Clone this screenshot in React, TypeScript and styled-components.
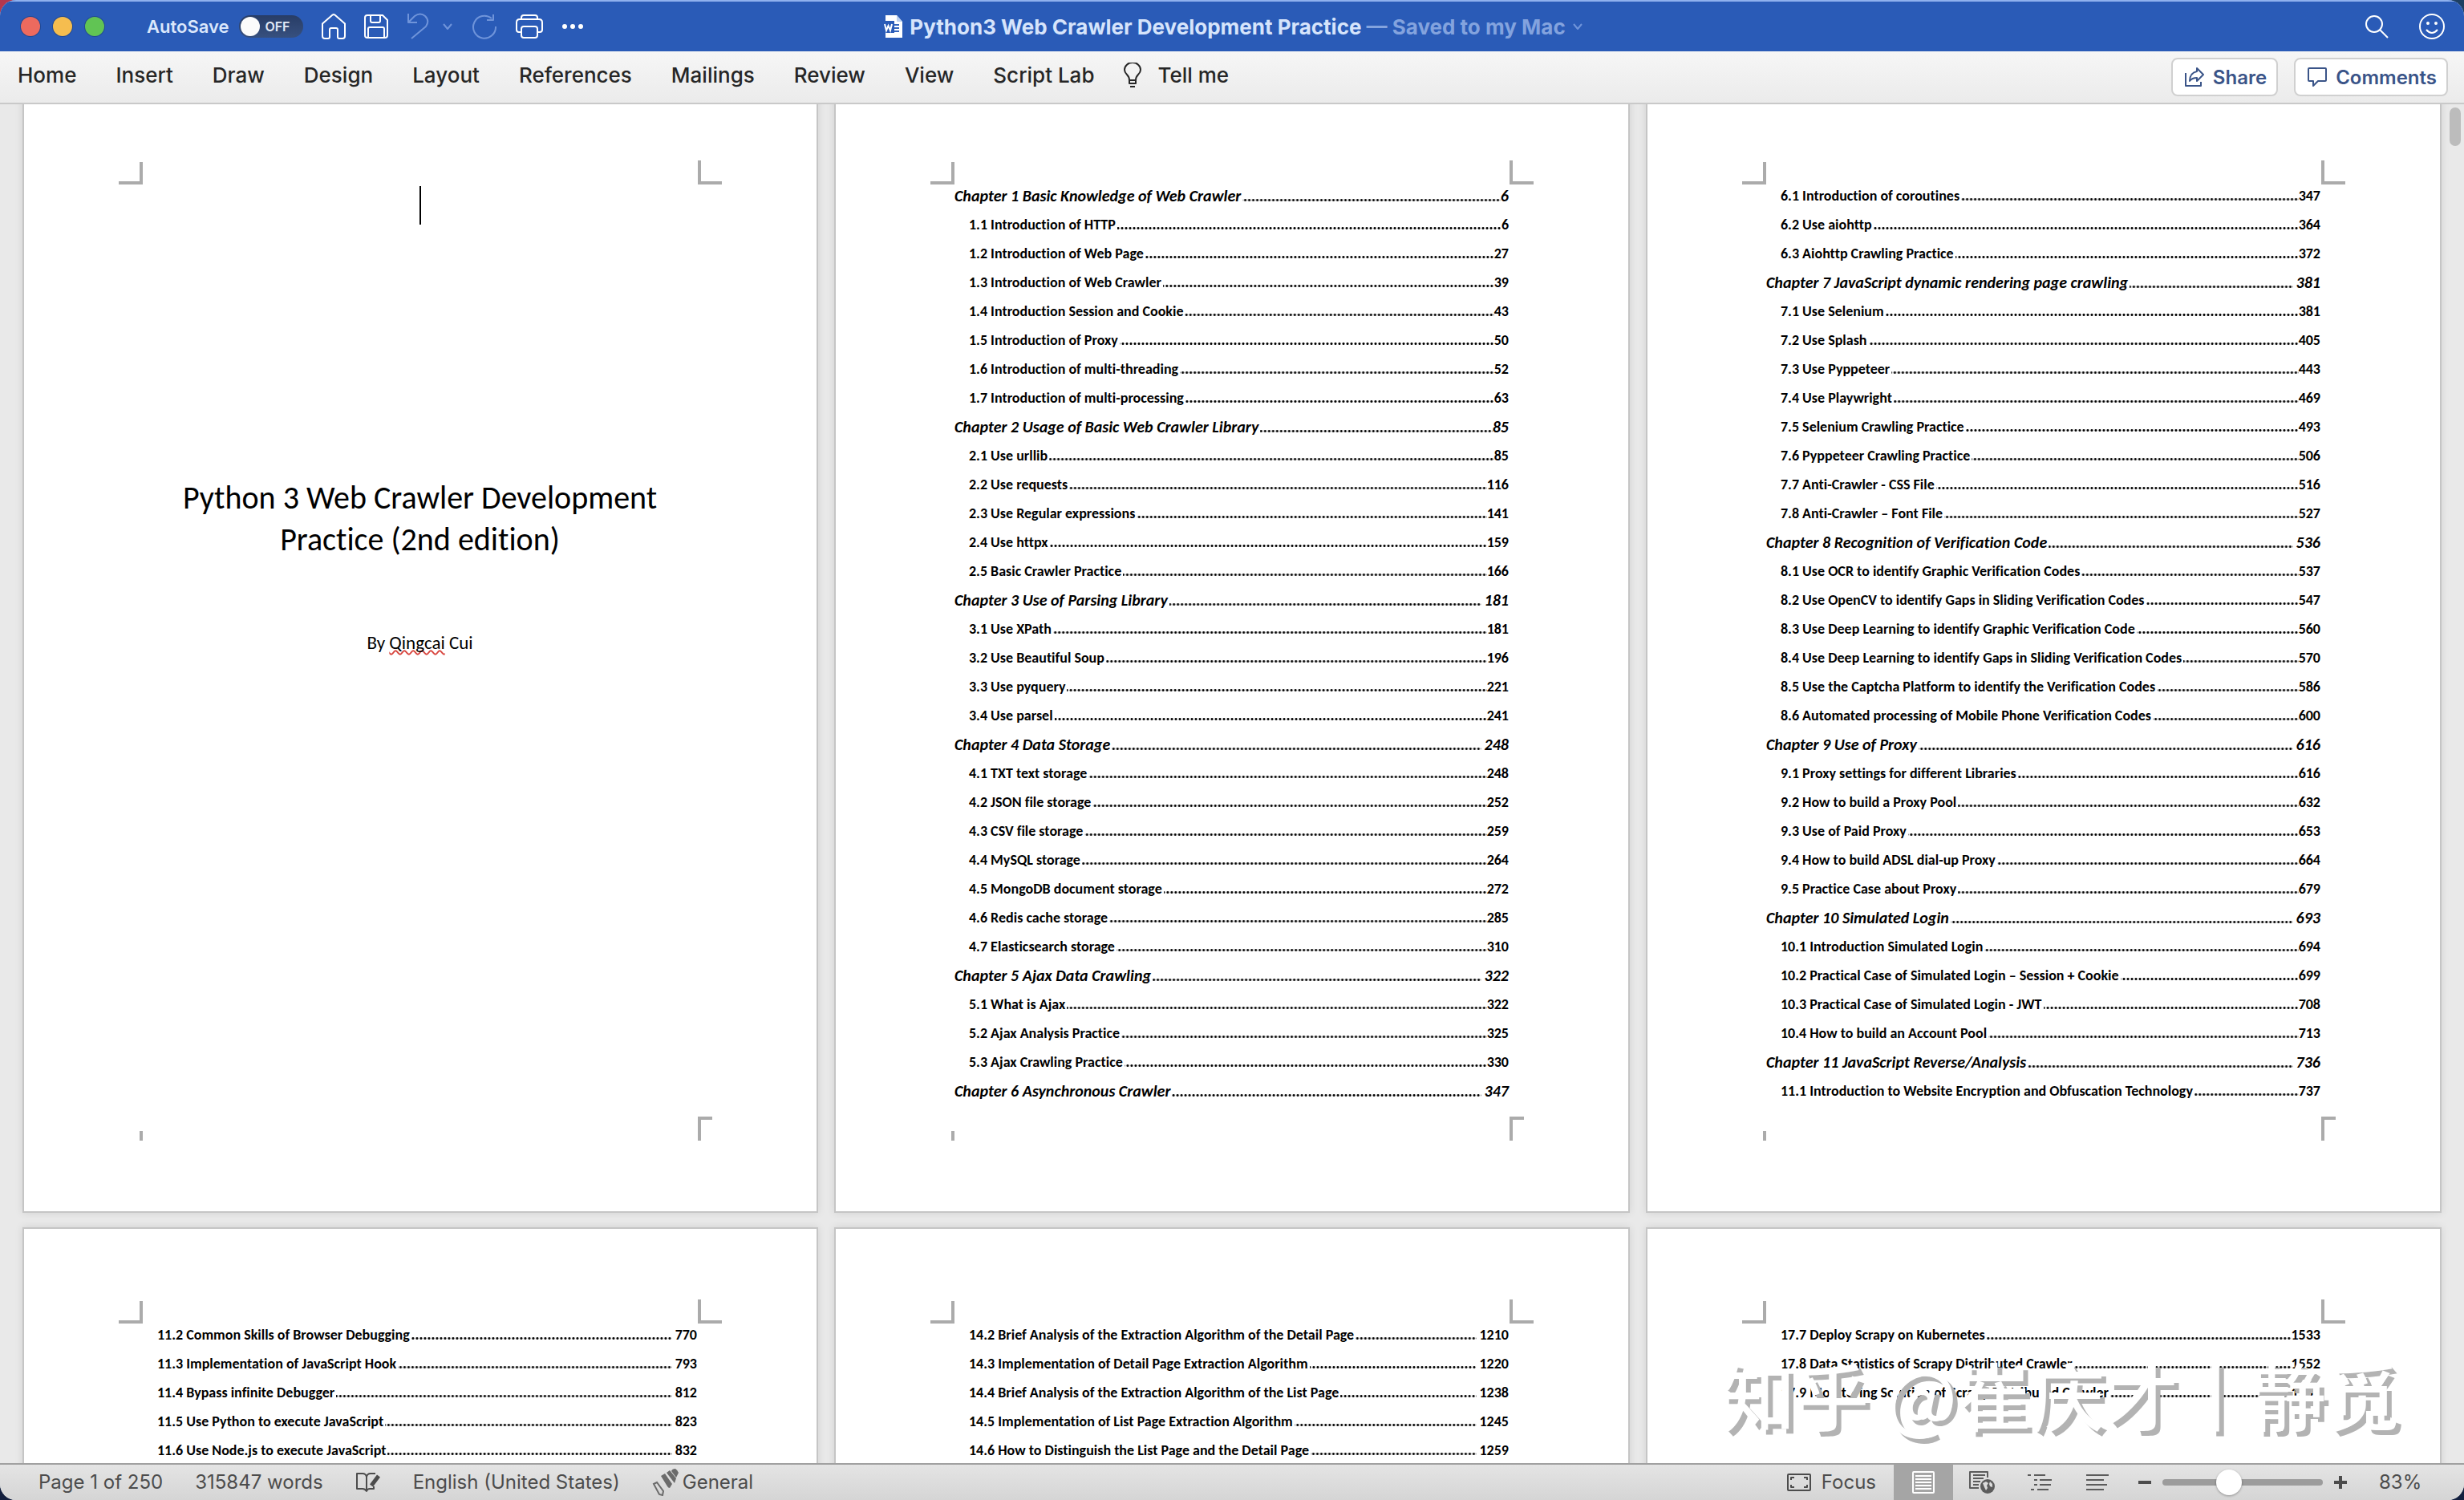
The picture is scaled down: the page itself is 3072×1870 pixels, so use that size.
import React from 'react';
import styled, { createGlobalStyle, css } from 'styled-components';

const ui = `Inter, 'Liberation Sans', sans-serif`;
const doc = `Carlito, Lato, 'Liberation Sans', sans-serif`;

const GlobalStyle = createGlobalStyle`
  *, *::before, *::after { box-sizing: border-box; }
  body { margin: 0; background: linear-gradient(90deg, #b3374f 0 30%, #1d3f63 70%); font-family: ${ui}; }
  button, input { font: inherit; margin: 0; }
  button { padding: 0; border: 0; background: none; color: inherit; }
  ol { list-style: none; margin: 0; padding: 0; }
  svg { display: block; flex: none; }
`;

/* ---------- window ---------- */
const Desktop = styled.div`
  background: linear-gradient(#0000 50%, #14203f 50%);
`;
const Window = styled.div`
  display: flex;
  flex-direction: column;
  height: 100vh;
  overflow: hidden;
  border-radius: 20px;
  background: #e9e9e9;
`;

/* ---------- title bar ---------- */
const TitleBar = styled.header`
  display: grid;
  grid-template-columns: 1fr auto 1fr;
  align-items: center;
  flex: none;
  height: 64px;
  padding: 0 24px 0 26px;
  border-top: 2px solid #8fb1ee;
  background: #2a5bb7;
  color: #fff;
`;
const BarGroup = styled.div<{ $end?: boolean }>`
  display: flex;
  align-items: center;
  gap: ${(p) => (p.$end ? 38 : 23)}px;
  justify-content: ${(p) => (p.$end ? 'flex-end' : 'flex-start')};
`;
const Lights = styled.div`
  display: flex;
  gap: 16px;
  margin-right: 30px;
`;
const Light = styled.button<{ $color: string }>`
  width: 24px;
  height: 24px;
  border-radius: 50%;
  background: ${(p) => p.$color};
  box-shadow: 0 0 0 1px #0003;
`;
const AutoSave = styled.label`
  display: flex;
  align-items: center;
  gap: 12px;
  font-size: 22px;
  font-weight: 600;
  color: #dbe7fb;
`;
const SwitchTrack = styled.span`
  position: relative;
  display: flex;
  align-items: center;
  justify-content: flex-end;
  width: 80px;
  height: 28px;
  padding-right: 16px;
  border-radius: 14px;
  background: linear-gradient(#283d66, #37507f);
  font-size: 16px;
  font-weight: 600;
  color: #e3eaf6;
`;
const SwitchInput = styled.input`
  appearance: none;
  position: absolute;
  left: 2px;
  top: 2px;
  width: 24px;
  height: 24px;
  border-radius: 50%;
  background: #fbfbfb;
`;
const IconButton = styled.button<{ $dim?: boolean }>`
  display: flex;
  color: ${(p) => (p.$dim ? '#6f94da' : '#fff')};
`;
const UndoGroup = styled.div`
  display: flex;
  align-items: center;
  gap: 16px;
`;
const DocTitle = styled.h1`
  display: flex;
  align-items: center;
  gap: 8px;
  margin: 0;
  font-size: 26px;
  font-weight: 700;
  white-space: pre;
  color: #d6e4fb;
`;
const SavedState = styled.span`
  color: #83a3de;
`;

/* ---------- ribbon ---------- */
const Ribbon = styled.nav`
  display: flex;
  align-items: center;
  justify-content: space-between;
  flex: none;
  height: 66px;
  padding: 0 20px 0 22px;
  border-bottom: 2px solid #c9c9c9;
  background: linear-gradient(#f6f6f6, #ebebeb);
`;
const Tabs = styled.div`
  display: flex;
  align-items: center;
  gap: 49px;
  font-size: 26px;
  font-weight: 500;
  line-height: 32px;
  color: #262626;
  padding-bottom: 4px;
`;
const TellMe = styled.button`
  display: flex;
  align-items: center;
  gap: 20px;
  margin-left: -12px;
`;
const Actions = styled.div`
  display: flex;
  gap: 20px;
`;
const ActionButton = styled.button`
  display: flex;
  align-items: center;
  gap: 10px;
  height: 48px;
  padding: 0 12px 0 14px;
  border: 2px solid #d0d0d0;
  border-radius: 8px;
  background: #fff;
  font-size: 24px;
  font-weight: 600;
  color: #3a5488;
`;

/* ---------- document ---------- */
const Workspace = styled.main`
  position: relative;
  display: flex;
  flex: 1;
  min-height: 0;
  overflow: hidden;
`;
const Sheets = styled.div`
  display: grid;
  grid-template-columns: repeat(3, minmax(0, 1fr));
  grid-auto-rows: max-content;
  gap: 18px 20px;
  flex: 1;
  margin-top: -20px;
  padding-left: 28px;
`;
const ScrollTrack = styled.div`
  flex: none;
  width: 28px;
  padding: 4px 4px 0 10px;
`;
const ScrollThumb = styled.div`
  height: 48px;
  border-radius: 7px;
  background: #bcbcbc;
`;
const Page = styled.article`
  position: relative;
  min-height: 1402px;
  padding: 114px 149px 0 148px;
  border: 2px solid #c5c5c5;
  background: #fff;
  box-shadow: 0 0 10px #0000001a;
  font-family: ${doc};
  font-variant-ligatures: none;
  color: #000;
`;
const corners = {
  tl: css`left: 118px; top: 90px; width: 30px; height: 28px; border-width: 0 4px 4px 0;`,
  tr: css`right: 118px; top: 88px; width: 30px; height: 30px; border-width: 0 0 4px 4px;`,
  bl: css`left: 144px; top: 1298px; width: 4px; height: 12px; border-width: 0 4px 0 0;`,
  br: css`right: 130px; top: 1280px; width: 18px; height: 30px; border-width: 4px 0 0 4px;`,
};
const Corner = styled.span<{ $at: keyof typeof corners }>`
  position: absolute;
  border: 0 solid #ababab;
  ${(p) => corners[p.$at]}
`;
const Caret = styled.div`
  width: 2px;
  height: 48px;
  margin: 6px auto 0;
  background: #000;
`;
const BookTitle = styled.h2`
  margin: 315px 0 84px;
  font-size: 40px;
  font-weight: 400;
  line-height: 52px;
  text-align: center;
`;
const Byline = styled.p`
  margin: 0;
  font-size: 23px;
  line-height: 36px;
  text-align: center;
`;
const Misspelled = styled.span`
  text-decoration: underline wavy #d8453e 2px;
  text-decoration-skip-ink: none;
`;
const Entry = styled.li<{ $chapter: boolean }>`
  padding-left: ${(p) => (p.$chapter ? 0 : 18)}px;
  font-size: ${(p) => (p.$chapter ? 20 : 18)}px;
  font-style: ${(p) => (p.$chapter ? 'italic' : 'normal')};
  font-weight: 700;
  line-height: 36px;
`;
const EntryLink = styled.a`
  display: flex;
  align-items: baseline;
  color: inherit;
  text-decoration: none;
  white-space: nowrap;
`;
const Leader = styled.span<{ $gap: number }>`
  flex: 1;
  height: 3px;
  margin: 0 ${(p) => p.$gap}px 0 2px;
  background: radial-gradient(circle at 2px 50%, #000 1px, #0000 2px) right bottom / 5px 3px repeat-x;
`;
const Watermark = styled.p`
  position: absolute;
  right: 80px;
  bottom: 22px;
  margin: 0;
  font-family: 'Noto Sans CJK SC', sans-serif;
  font-size: 92px;
  font-weight: 500;
  line-height: 130px;
  white-space: pre;
  color: #fff;
  text-shadow: 6px 6px 0 #b3b3b3;
`;

/* ---------- status bar ---------- */
const StatusBar = styled.footer`
  display: flex;
  align-items: center;
  justify-content: space-between;
  flex: none;
  height: 46px;
  padding: 0 50px 0 48px;
  border-top: 2px solid #a1a1a1;
  background: linear-gradient(#e4e4e4, #d5d5d5);
  font-size: 24px;
  line-height: 44px;
  color: #4c4c4c;
`;
const StatusGroup = styled.div<{ $gap: number }>`
  display: flex;
  align-items: center;
  height: 100%;
  gap: ${(p) => p.$gap}px;
`;
const StatusButton = styled.button<{ $gap?: number }>`
  display: flex;
  align-items: center;
  gap: ${(p) => p.$gap ?? 0}px;
`;
const ViewButton = styled.button<{ $active?: boolean }>`
  display: flex;
  align-items: center;
  justify-content: center;
  width: ${(p) => (p.$active ? 74 : 72)}px;
  height: 44px;
  background: ${(p) => (p.$active ? '#a5a5a5' : 'none')};
  color: ${(p) => (p.$active ? '#fff' : '#5c5c5c')};
`;
const Zoom = styled.input`
  appearance: none;
  width: 200px;
  height: 8px;
  border-radius: 4px;
  background: #9c9c9c;
  &::-webkit-slider-thumb {
    appearance: none;
    width: 32px;
    height: 32px;
    border-radius: 50%;
    background: #fff;
    box-shadow: 0 1px 3px #0005;
  }
`;
const ZoomValue = styled.output`
  width: 56px;
  margin-left: 26px;
`;

/* ---------- icons ---------- */
type IconProps = { w: number; h: number; sw?: number; children: React.ReactNode };
const Icon = ({ w, h, sw = 2, children }: IconProps) => (
  <svg width={w} height={h} viewBox={`0 0 ${w} ${h}`} fill="none" stroke="currentColor" strokeWidth={sw} strokeLinejoin="round" aria-hidden="true">
    {children}
  </svg>
);
const HomeIcon = () => (
  <Icon w={30} h={32}>
    <path d="M1 12.5 13.6 1.6q1.4-1 2.8 0L29 12.5V28q0 3-3 3h-4q-2 0-2-2V20q0-2-2-2h-6q-2 0-2 2v9q0 2-2 2H4q-3 0-3-3Z" />
  </Icon>
);
const SaveIcon = () => (
  <Icon w={30} h={30}>
    <path d="M4 1h19l6 6v19q0 3-3 3H4q-3 0-3-3V4q0-3 3-3ZM8 1v7q0 2 2 2h8q2 0 2-2V1M5 29V18q0-2 2-2h16q2 0 2 2v11" />
  </Icon>
);
const UndoIcon = () => (
  <Icon w={28} h={34}>
    <path d="M2 1v11h11M2 12 10 4Q17-1 23 4q6 6 1 13L6 32" />
  </Icon>
);
const ChevronIcon = () => (
  <Icon w={14} h={10} sw={2}>
    <path d="m2 2 5 6 5-6" />
  </Icon>
);
const RedoIcon = () => (
  <Icon w={32} h={32}>
    <path d="M25 6A14 14 0 1 0 30 16M27 1v7h-8" />
  </Icon>
);
const PrintIcon = () => (
  <Icon w={34} h={30}>
    <path d="M7 6V4q0-3 3-3h14q3 0 3 3v2M7 22H4q-3 0-3-3v-9q0-4 4-4h24q4 0 4 4v9q0 3-3 3h-3M10 15h14q3 0 3 3v8q0 3-3 3H10q-3 0-3-3v-8q0-3 3-3Z" />
  </Icon>
);
const MoreIcon = () => (
  <svg width="28" height="8" viewBox="0 0 28 8" fill="currentColor" aria-hidden="true">
    <circle cx="4" cy="4" r="3" />
    <circle cx="14" cy="4" r="3" />
    <circle cx="24" cy="4" r="3" />
  </svg>
);
const WordFileIcon = () => (
  <svg width="26" height="30" viewBox="0 0 26 30" aria-hidden="true">
    <path d="M4 1h14l7 8v20H4Z" fill="#fff" />
    <path d="M18 1v8h7Z" fill="#bcd0f0" />
    <path d="M15 13h6M15 17h6M15 21h6" stroke="#3465bd" strokeWidth="2" />
    <rect x="0" y="8" width="15" height="15" fill="#2a5bb7" />
    <path d="m3 12 2 8 2.500-6 2.500 6 2-8" stroke="#fff" strokeWidth="2" fill="none" />
  </svg>
);
const SearchIcon = () => (
  <Icon w={30} h={30}>
    <circle cx="12" cy="12" r="10" />
    <path d="m19 19 10 10" />
  </Icon>
);
const SmileIcon = () => (
  <Icon w={32} h={32}>
    <circle cx="16" cy="16" r="15" />
    <path d="M9 20q7 8 14 0" />
    <circle cx="11" cy="12" r="1" />
    <circle cx="21" cy="12" r="1" />
  </Icon>
);
const BulbIcon = () => (
  <Icon w={22} h={32}>
    <path d="M7 22q0-4-3-7-3-3-3-6a10 9 0 0 1 20 0q0 3-3 6-3 3-3 7ZM7 22v4h8v-4M8 30h6" />
  </Icon>
);
const ShareIcon = () => (
  <Icon w={26} h={26}>
    <path d="M2 8v16h19v-5M16 2l8 8-8 8v-4q-6 0-9 4 0-10 9-12Z" />
  </Icon>
);
const CommentIcon = () => (
  <Icon w={26} h={26}>
    <path d="M3 2h20q1 0 1 1v14q0 1-1 1h-9l-6 6v-6H3q-1 0-1-1V3q0-1 1-1Z" />
  </Icon>
);
const ProofIcon = () => (
  <Icon w={32} h={28}>
    <path d="M14 25q-2-3-5-3H2V3h7q4 0 5 4v18ZM14 7q1-4 5-4h6M14 25q1-3 4-3h5v-3" />
    <path d="m20 18 9-12" strokeWidth="5" />
  </Icon>
);
const PenIcon = () => (
  <svg width="34" height="34" viewBox="0 0 34 34" fill="#6b6b6b" aria-hidden="true">
    <path d="m11 9 5-3 9 13-3 5q-2 0-3-2ZM18 5l4-3 8 10-2 6ZM24 3q1-3 5-3 3 2 4 5l-3 6Z" />
    <path d="m2 19 4-2 8 11-1 5-4-1Z" fill="none" stroke="#6b6b6b" strokeWidth="2" />
  </svg>
);
const FocusIcon = () => (
  <Icon w={32} h={24}>
    <rect x="2" y="2" width="28" height="20" rx="1" />
    <path d="M6 9V6h4M22 6h4v3M26 15v3h-4M10 18H6v-3" />
  </Icon>
);
const PrintLayoutIcon = () => (
  <Icon w={28} h={28}>
    <rect x="1" y="1" width="26" height="26" rx="1" />
    <path d="M4 6h20M4 10h20M4 14h20M4 18h20M4 22h20" />
  </Icon>
);
const WebLayoutIcon = () => (
  <Icon w={34} h={30}>
    <path d="M13 22H2V2h22v7M6 6h15M6 10h13M6 14h9M6 18h7" />
    <circle cx="24" cy="20" r="9" fill="currentColor" stroke="none" />
    <path d="m18 16 4-2 3 2-2 3 1 3-2 3-2-4ZM27 14l3 3v4l-3-1-1-3Z" fill="#dcdcdc" stroke="none" />
  </Icon>
);
const OutlineIcon = () => (
  <Icon w={32} h={22}>
    <path d="M1 2h4M9 2h14M9 8h4M16 8h15M9 14h4M16 14h14M5 20h4M13 20h14" />
  </Icon>
);
const DraftIcon = () => (
  <Icon w={28} h={22}>
    <path d="M0 2h28M0 8h22M0 14h26M0 20h22" />
  </Icon>
);
const MinusIcon = () => (
  <Icon w={18} h={18} sw={4}>
    <path d="M1 9h16" />
  </Icon>
);
const PlusIcon = () => (
  <Icon w={18} h={18} sw={4}>
    <path d="M1 9h16M9 1v16" />
  </Icon>
);

/* ---------- content ---------- */
type Item = [title: string, page: number];

const contentsA: Item[] = [
  ['Chapter 1 Basic Knowledge of Web Crawler', 6],
  ['1.1 Introduction of HTTP', 6],
  ['1.2 Introduction of Web Page', 27],
  ['1.3 Introduction of Web Crawler', 39],
  ['1.4 Introduction Session and Cookie', 43],
  ['1.5 Introduction of Proxy', 50],
  ['1.6 Introduction of multi-threading', 52],
  ['1.7 Introduction of multi-processing', 63],
  ['Chapter 2 Usage of Basic Web Crawler Library', 85],
  ['2.1 Use urllib', 85],
  ['2.2 Use requests', 116],
  ['2.3 Use Regular expressions', 141],
  ['2.4 Use httpx', 159],
  ['2.5 Basic Crawler Practice', 166],
  ['Chapter 3 Use of Parsing Library', 181],
  ['3.1 Use XPath', 181],
  ['3.2 Use Beautiful Soup', 196],
  ['3.3 Use pyquery', 221],
  ['3.4 Use parsel', 241],
  ['Chapter 4 Data Storage', 248],
  ['4.1 TXT text storage', 248],
  ['4.2 JSON file storage', 252],
  ['4.3 CSV file storage', 259],
  ['4.4 MySQL storage', 264],
  ['4.5 MongoDB document storage', 272],
  ['4.6 Redis cache storage', 285],
  ['4.7 Elasticsearch storage', 310],
  ['Chapter 5 Ajax Data Crawling', 322],
  ['5.1 What is Ajax', 322],
  ['5.2 Ajax Analysis Practice', 325],
  ['5.3 Ajax Crawling Practice', 330],
  ['Chapter 6 Asynchronous Crawler', 347],
];
const contentsB: Item[] = [
  ['6.1 Introduction of coroutines', 347],
  ['6.2 Use aiohttp', 364],
  ['6.3 Aiohttp Crawling Practice', 372],
  ['Chapter 7 JavaScript dynamic rendering page crawling', 381],
  ['7.1 Use Selenium', 381],
  ['7.2 Use Splash', 405],
  ['7.3 Use Pyppeteer', 443],
  ['7.4 Use Playwright', 469],
  ['7.5 Selenium Crawling Practice', 493],
  ['7.6 Pyppeteer Crawling Practice', 506],
  ['7.7 Anti-Crawler - CSS File', 516],
  ['7.8 Anti-Crawler – Font File', 527],
  ['Chapter 8 Recognition of Verification Code', 536],
  ['8.1 Use OCR to identify Graphic Verification Codes', 537],
  ['8.2 Use OpenCV to identify Gaps in Sliding Verification Codes', 547],
  ['8.3 Use Deep Learning to identify Graphic Verification Code', 560],
  ['8.4 Use Deep Learning to identify Gaps in Sliding Verification Codes', 570],
  ['8.5 Use the Captcha Platform to identify the Verification Codes', 586],
  ['8.6 Automated processing of Mobile Phone Verification Codes', 600],
  ['Chapter 9 Use of Proxy', 616],
  ['9.1 Proxy settings for different Libraries', 616],
  ['9.2 How to build a Proxy Pool', 632],
  ['9.3 Use of Paid Proxy', 653],
  ['9.4 How to build ADSL dial-up Proxy', 664],
  ['9.5 Practice Case about Proxy', 679],
  ['Chapter 10 Simulated Login', 693],
  ['10.1 Introduction Simulated Login', 694],
  ['10.2 Practical Case of Simulated Login – Session + Cookie', 699],
  ['10.3 Practical Case of Simulated Login - JWT', 708],
  ['10.4 How to build an Account Pool', 713],
  ['Chapter 11 JavaScript Reverse/Analysis', 736],
  ['11.1 Introduction to Website Encryption and Obfuscation Technology', 737],
];
const contentsC: Item[] = [
  ['11.2 Common Skills of Browser Debugging', 770],
  ['11.3 Implementation of JavaScript Hook', 793],
  ['11.4 Bypass infinite Debugger', 812],
  ['11.5 Use Python to execute JavaScript', 823],
  ['11.6 Use Node.js to execute JavaScript', 832],
];
const contentsD: Item[] = [
  ['14.2 Brief Analysis of the Extraction Algorithm of the Detail Page', 1210],
  ['14.3 Implementation of Detail Page Extraction Algorithm', 1220],
  ['14.4 Brief Analysis of the Extraction Algorithm of the List Page', 1238],
  ['14.5 Implementation of List Page Extraction Algorithm', 1245],
  ['14.6 How to Distinguish the List Page and the Detail Page', 1259],
];
const contentsE: Item[] = [
  ['17.7 Deploy Scrapy on Kubernetes', 1533],
  ['17.8 Data Statistics of Scrapy Distributed Crawler', 1552],
  ['17.9 Monitoring Solution of Scrapy Distributed Crawler', 1561],
];

const tabs = ['Home', 'Insert', 'Draw', 'Design', 'Layout', 'References', 'Mailings', 'Review', 'View', 'Script Lab'];

const Sheet = ({ children }: { children: React.ReactNode }) => (
  <Page>
    <Corner $at="tl" />
    <Corner $at="tr" />
    {children}
    <Corner $at="bl" />
    <Corner $at="br" />
  </Page>
);

const Contents = ({ items, gap = 0 }: { items: Item[]; gap?: number }) => (
  <Sheet>
    <ol>
      {items.map(([title, page]) => {
        const chapter = title.startsWith('Chapter');
        return (
          <Entry key={title} $chapter={chapter}>
            <EntryLink href="#">
              <span>{title}</span>
              <Leader $gap={chapter && page > 99 ? 4 : gap} />
              <span>{page}</span>
            </EntryLink>
          </Entry>
        );
      })}
    </ol>
  </Sheet>
);

export default function App() {
  return (
    <Desktop>
      <GlobalStyle />
      <Window>
        <TitleBar>
          <BarGroup>
            <Lights>
              <Light $color="#ed6a5e" aria-label="Close" />
              <Light $color="#f5bd4f" aria-label="Minimize" />
              <Light $color="#61c454" aria-label="Zoom window" />
            </Lights>
            <AutoSave>
              AutoSave
              <SwitchTrack>
                <SwitchInput type="checkbox" />
                OFF
              </SwitchTrack>
            </AutoSave>
            <IconButton aria-label="Home"><HomeIcon /></IconButton>
            <IconButton aria-label="Save"><SaveIcon /></IconButton>
            <UndoGroup>
              <IconButton $dim aria-label="Undo"><UndoIcon /></IconButton>
              <IconButton $dim aria-label="Undo history"><ChevronIcon /></IconButton>
            </UndoGroup>
            <IconButton $dim aria-label="Redo"><RedoIcon /></IconButton>
            <IconButton aria-label="Print"><PrintIcon /></IconButton>
            <IconButton aria-label="More"><MoreIcon /></IconButton>
          </BarGroup>
          <DocTitle>
            <WordFileIcon />
            <span>
              Python3 Web Crawler Development Practice<SavedState> — Saved to my Mac</SavedState>
            </span>
            <IconButton $dim aria-label="Document menu"><ChevronIcon /></IconButton>
          </DocTitle>
          <BarGroup $end>
            <IconButton aria-label="Search"><SearchIcon /></IconButton>
            <IconButton aria-label="Feedback"><SmileIcon /></IconButton>
          </BarGroup>
        </TitleBar>

        <Ribbon>
          <Tabs>
            {tabs.map((t) => (
              <button key={t}>{t}</button>
            ))}
            <TellMe><BulbIcon />Tell me</TellMe>
          </Tabs>
          <Actions>
            <ActionButton><ShareIcon />Share</ActionButton>
            <ActionButton><CommentIcon />Comments</ActionButton>
          </Actions>
        </Ribbon>

        <Workspace>
          <Sheets>
            <Sheet>
              <Caret />
              <BookTitle>Python 3 Web Crawler Development Practice (2nd edition)</BookTitle>
              <Byline>
                By <Misspelled>Qingcai</Misspelled> Cui
              </Byline>
            </Sheet>
            <Contents items={contentsA} />
            <Contents items={contentsB} />
            <Contents items={contentsC} gap={4} />
            <Contents items={contentsD} gap={4} />
            <Contents items={contentsE} />
          </Sheets>
          <ScrollTrack>
            <ScrollThumb />
          </ScrollTrack>
          <Watermark>知乎 @崔庆才丨静觅</Watermark>
        </Workspace>

        <StatusBar>
          <StatusGroup $gap={40}>
            <span>Page 1 of 250</span>
            <span>315847 words</span>
            <StatusButton aria-label="Proofing"><ProofIcon /></StatusButton>
            <StatusButton>English (United States)</StatusButton>
            <StatusButton $gap={4}><PenIcon />General</StatusButton>
          </StatusGroup>
          <StatusGroup $gap={14}>
            <StatusGroup $gap={0}>
              <StatusGroup $gap={22}>
                <StatusButton $gap={12}><FocusIcon />Focus</StatusButton>
                <ViewButton $active aria-label="Print layout"><PrintLayoutIcon /></ViewButton>
              </StatusGroup>
              <ViewButton aria-label="Web layout"><WebLayoutIcon /></ViewButton>
              <ViewButton aria-label="Outline"><OutlineIcon /></ViewButton>
              <ViewButton aria-label="Draft"><DraftIcon /></ViewButton>
            </StatusGroup>
            <StatusGroup $gap={13}>
              <StatusButton aria-label="Zoom out"><MinusIcon /></StatusButton>
              <Zoom type="range" min={0} max={100} defaultValue={40} aria-label="Zoom" />
              <StatusButton aria-label="Zoom in"><PlusIcon /></StatusButton>
              <ZoomValue>83%</ZoomValue>
            </StatusGroup>
          </StatusGroup>
        </StatusBar>
      </Window>
    </Desktop>
  );
}
